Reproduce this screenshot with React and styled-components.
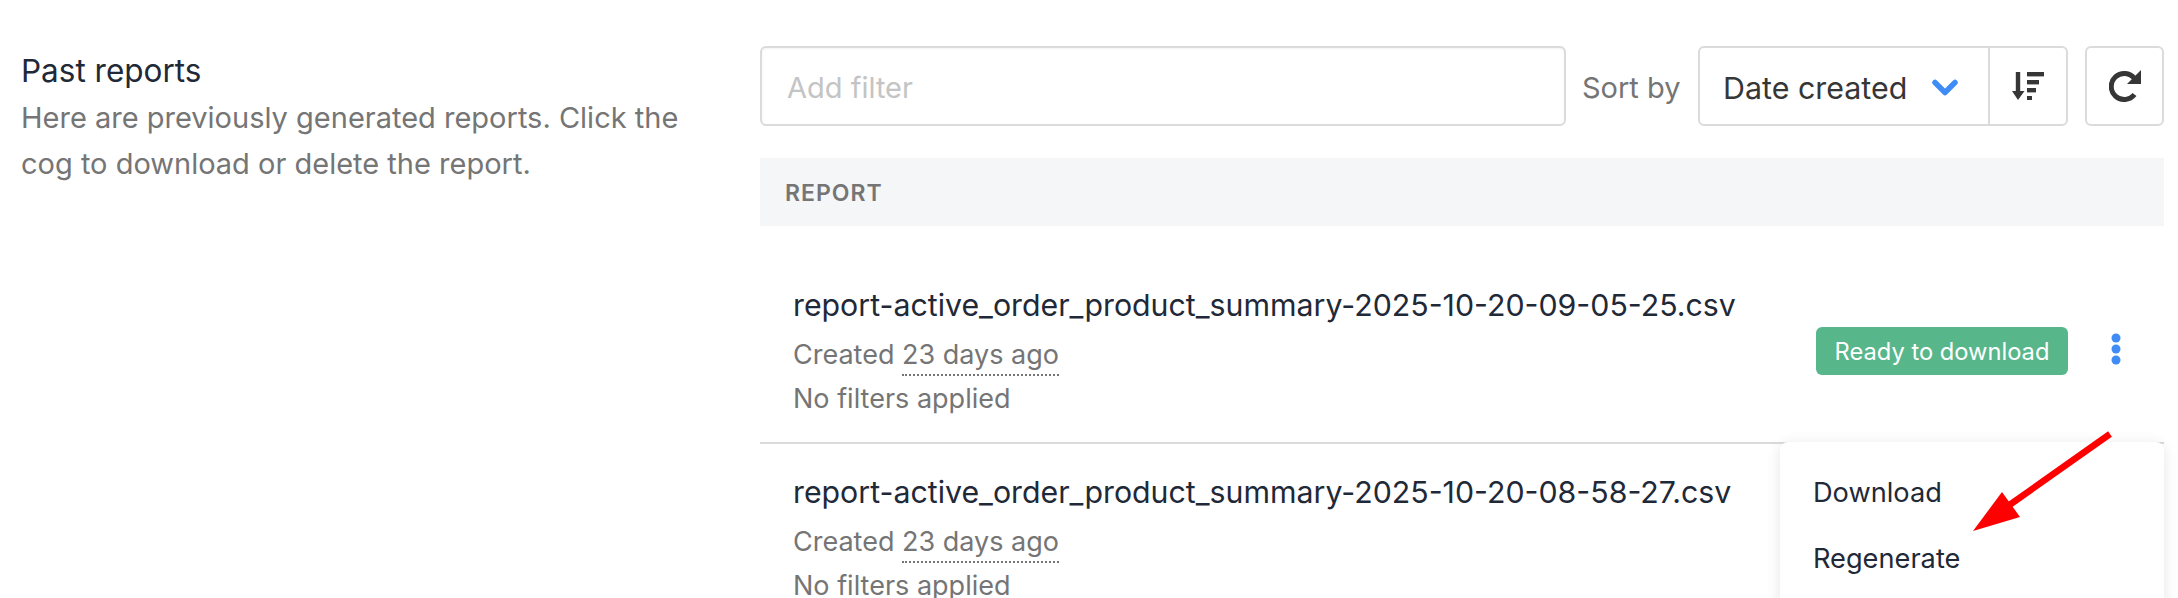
import React from 'react';
import styled, { createGlobalStyle } from 'styled-components';

const GlobalStyle = createGlobalStyle`
  html, body {
    margin: 0;
    padding: 0;
    background: #fff;
    font-family: Inter, "Liberation Sans", sans-serif;
    -webkit-font-smoothing: antialiased;
  }
`;

const Page = styled.div`
  position: relative;
  display: grid;
  grid-template-columns: 739px 1404px;
  width: 2178px;
  height: 598px;
  padding-left: 21px;
  box-sizing: border-box;
  overflow: hidden;
`;

const Intro = styled.div`
  padding-top: 52px;
`;

const IntroTitle = styled.h2`
  margin: 0;
  font-size: 31.5px;
  line-height: 38px;
  font-weight: 400;
  color: #1f2937;
`;

const IntroText = styled.p`
  margin: 5px 0 0;
  width: 690px;
  font-size: 29px;
  line-height: 46px;
  color: #757575;
`;

const Content = styled.div`
  padding-top: 46px;
`;

const Toolbar = styled.div`
  display: flex;
  align-items: center;
  height: 80px;
`;

const FilterInput = styled.input`
  width: 806px;
  height: 80px;
  box-sizing: border-box;
  border: 2px solid #dbdbdb;
  border-radius: 6px;
  padding: 3px 25px 0;
  font: 400 29px Inter, sans-serif;
  outline: none;
  box-shadow: inset 0 1px 3px rgba(0, 0, 0, 0.05);

  &::placeholder {
    color: #c4c4c4;
    opacity: 1;
  }
`;

const SortLabel = styled.span`
  flex: 1;
  padding: 3px 0 0 16px;
  font-size: 29px;
  color: #757575;
  white-space: nowrap;
`;

const SortGroup = styled.div`
  display: flex;
  width: 370px;
  height: 80px;
  box-sizing: border-box;
  border: 2px solid #dbdbdb;
  border-radius: 6px;
`;

const SortSelect = styled.div`
  display: flex;
  align-items: center;
  justify-content: space-between;
  width: 290px;
  padding: 3px 30px 0 23px;
  box-sizing: border-box;
  border-right: 2px solid #dbdbdb;
  font-size: 30.4px;
  color: #363636;
`;

const IconCell = styled.div`
  flex: 1;
  display: flex;
  align-items: center;
  justify-content: center;
  color: #363636;
`;

const RefreshButton = styled.div`
  display: flex;
  align-items: center;
  justify-content: center;
  width: 79px;
  height: 80px;
  margin-left: 17px;
  box-sizing: border-box;
  border: 2px solid #dbdbdb;
  border-radius: 6px;
  color: #363636;
`;

const TableHead = styled.div`
  display: flex;
  align-items: center;
  height: 68px;
  margin-top: 32px;
  padding: 2px 0 0 25px;
  box-sizing: border-box;
  background: #f5f6f8;
  font-size: 23px;
  font-weight: 600;
  letter-spacing: 1px;
  color: #757575;
`;

const RowList = styled.div`
  padding-top: 32px;
`;

const Row = styled.div`
  display: flex;
  align-items: center;
  justify-content: space-between;
  height: 186px;
  padding: 0 43px 0 33px;
  box-sizing: border-box;
  border-bottom: ${(p) => (p.$last ? 'none' : '2px solid #dbdbdb')};
`;

const RowText = styled.div`
  display: flex;
  flex-direction: column;
  padding: 5px 0 10px;
`;

const FileName = styled.div`
  margin-bottom: 17px;
  font-size: 30.3px;
  line-height: 42px;
  color: #1f2937;
`;

const Meta = styled.div`
  font-size: 27px;
  line-height: 24px;
  color: #757575;

  & + & {
    margin-top: 20px;
  }
`;

const Ago = styled.span`
  border-bottom: 2px dotted #757575;
  padding-bottom: 3px;
`;

const RowActions = styled.div`
  display: flex;
  align-items: center;
  gap: 43px;
`;

const Badge = styled.span`
  display: inline-flex;
  align-items: center;
  justify-content: center;
  width: 252px;
  height: 48px;
  margin-top: 2px;
  border-radius: 6px;
  background: #57b68a;
  color: #fff;
  font-size: 23.7px;
`;

const Menu = styled.div`
  position: absolute;
  left: 1780px;
  top: 442px;
  width: 384px;
  height: 200px;
  padding: 17px 0;
  box-sizing: border-box;
  background: #fff;
  border-radius: 8px;
  box-shadow: 0 2px 14px rgba(0, 0, 0, 0.1);
`;

const MenuItem = styled.div`
  height: 66px;
  padding-left: 33px;
  display: flex;
  align-items: center;
  font-size: 27.2px;
  color: #1f2937;
`;

const Arrow = styled.svg`
  position: absolute;
  left: 1960px;
  top: 425px;
`;

const Dots = () => (
  <svg width="10" height="34" viewBox="0 0 10 34" fill="#3f8cf7">
    <circle cx="5" cy="5" r="4.5" />
    <circle cx="5" cy="16" r="4.5" />
    <circle cx="5" cy="27" r="4.5" />
  </svg>
);

const Chevron = () => (
  <svg width="26" height="18" viewBox="0 0 26 18" fill="none" stroke="#3f8cf7" strokeWidth="5.5" strokeLinecap="round" strokeLinejoin="round">
    <path d="M3 3.5 L13 13.5 L23 3.5" />
  </svg>
);

const SortIcon = () => (
  <svg width="32" height="28" viewBox="0 0 32 28" fill="#363636">
    <path d="M3.8 0h4.4v19h4.3L6 28 0 19h3.8z" />
    <rect x="15" y="0" width="17" height="4.4" />
    <rect x="15" y="8" width="12" height="4.4" />
    <rect x="15" y="16" width="9" height="4.4" />
    <rect x="15" y="24" width="5" height="4.4" />
  </svg>
);

const RefreshIcon = () => (
  <svg width="32" height="32" viewBox="0 0 32 32" fill="none">
    <path d="M25.5 8.5 A13 13 0 1 0 25.5 24.5" stroke="#363636" strokeWidth="5" />
    <path d="M32 0v14H18z" fill="#363636" />
  </svg>
);

const reports = [
  { name: 'report-active_order_product_summary-2025-10-20-09-05-25.csv', ready: true },
  { name: 'report-active_order_product_summary-2025-10-20-08-58-27.csv' },
];

export default function App() {
  return (
    <Page>
      <GlobalStyle />
      <Intro>
        <IntroTitle>Past reports</IntroTitle>
        <IntroText>Here are previously generated reports. Click the cog to download or delete the report.</IntroText>
      </Intro>
      <Content>
        <Toolbar>
          <FilterInput placeholder="Add filter" />
          <SortLabel>Sort by</SortLabel>
          <SortGroup>
            <SortSelect>
              Date created
              <Chevron />
            </SortSelect>
            <IconCell>
              <SortIcon />
            </IconCell>
          </SortGroup>
          <RefreshButton>
            <RefreshIcon />
          </RefreshButton>
        </Toolbar>
        <TableHead>REPORT</TableHead>
        <RowList>
          {reports.map((r, i) => (
            <Row key={r.name} $last={i === reports.length - 1}>
              <RowText>
                <FileName>{r.name}</FileName>
                <Meta>
                  Created <Ago>23 days ago</Ago>
                </Meta>
                <Meta>No filters applied</Meta>
              </RowText>
              {r.ready && (
                <RowActions>
                  <Badge>Ready to download</Badge>
                  <Dots />
                </RowActions>
              )}
            </Row>
          ))}
        </RowList>
      </Content>
      <Menu>
        <MenuItem>Download</MenuItem>
        <MenuItem>Regenerate</MenuItem>
      </Menu>
      <Arrow width="160" height="115" viewBox="1960 425 160 115">
        <path d="M2110 434 L2008 506" stroke="#ff0000" strokeWidth="6.5" fill="none" />
        <path d="M2002 492 L2020 517 L1973 531 Z" fill="#ff0000" />
      </Arrow>
    </Page>
  );
}
